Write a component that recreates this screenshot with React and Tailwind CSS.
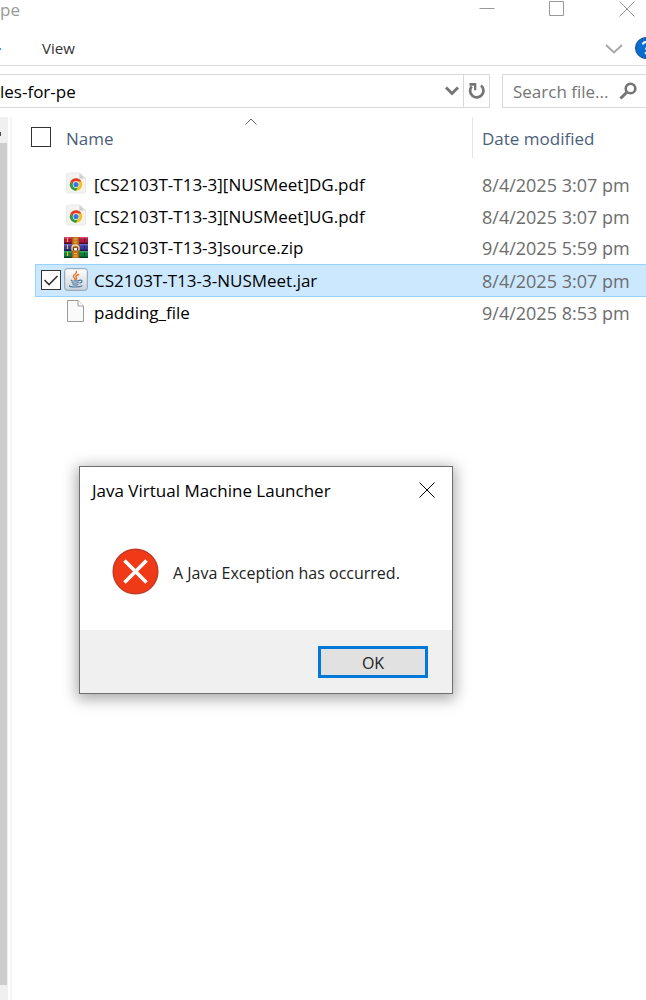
import React from "react";

const files = [
  { name: "[CS2103T-T13-3][NUSMeet]DG.pdf", date: "8/4/2025 3:07 pm", icon: "chrome" },
  { name: "[CS2103T-T13-3][NUSMeet]UG.pdf", date: "8/4/2025 3:07 pm", icon: "chrome" },
  { name: "[CS2103T-T13-3]source.zip", date: "9/4/2025 5:59 pm", icon: "archive" },
  { name: "CS2103T-T13-3-NUSMeet.jar", date: "8/4/2025 3:07 pm", icon: "java", selected: true },
  { name: "padding_file", date: "9/4/2025 8:53 pm", icon: "blank" },
];

function ChromeFileIcon() {
  return (
    <svg width="24" height="24" viewBox="0 0 24 24" aria-hidden="true">
      <path d="M4.500 1h11.500l5.500 5.500V19a2 2 0 0 1-2 2h-15a2 2 0 0 1-2-2V3a2 2 0 0 1 2-2z" fill="#f3f3f3" stroke="#e9e9e9" />
      <path d="M15.500 1v5.500h5.500z" fill="#cfcfcf" />
      <circle cx="12" cy="12.500" r="6.200" fill="#fbc116" />
      <path d="M6.630 9.400A6.200 6.200 0 0 1 17.370 9.400H12a3.100 3.100 0 0 0-2.700 4.600z" fill="#e33b2e" />
      <path d="M6.630 9.400A6.200 6.200 0 0 0 12 18.700l2.700-4.600a3.100 3.100 0 0 1-5.400 0z" fill="#2a9d4a" />
      <circle cx="12" cy="12.500" r="3.200" fill="#fff" />
      <circle cx="12" cy="12.500" r="2.600" fill="#2d7be8" />
    </svg>
  );
}

function ArchiveIcon() {
  return (
    <svg width="24" height="24" viewBox="0 0 24 24" aria-hidden="true">
      <rect x="0" y="1" width="24" height="6" fill="#b3123f" />
      <rect x="0" y="1" width="24" height="1.500" fill="#dc4770" />
      <rect x="0" y="6.500" width="24" height="1.500" fill="#4a1029" />
      <rect x="0" y="8" width="24" height="6" fill="#3b3a9c" />
      <rect x="0" y="8" width="24" height="1.500" fill="#6b69cf" />
      <rect x="0" y="13.500" width="24" height="1.500" fill="#1d1b4d" />
      <rect x="0" y="15" width="24" height="6" fill="#0d7f3e" />
      <rect x="0" y="15" width="24" height="1.500" fill="#37ab60" />
      <rect x="0" y="20.500" width="24" height="1.500" fill="#0a4022" />
      <path d="M3.500 2v4M3.500 9v4M3.500 16v4" stroke="#e8c33a" strokeWidth="1.200" />
      <path d="M20.500 2v4M20.500 9v4M20.500 16v4" stroke="#16182f" opacity=".5" />
      <rect x="8" y="1" width="7" height="21" fill="#c8761e" />
      <path d="M8 1v21M15 1v21" stroke="#7d4812" strokeWidth=".8" />
      <path d="M10 3h3M10 6h3M10 17.500h3M10 20h3" stroke="#efb54e" />
      <path d="M8 14.500V11.500a3.500 2.500 0 0 1 7 0v3" fill="none" stroke="#e7d9bd" strokeWidth="1.300" />
      <path d="M9 11.500h5v2.500l-2.500 1.500L9 14z" fill="#5b3a1c" />
      <rect x="10" y="12" width="3" height="2.500" fill="#f6f3e8" />
    </svg>
  );
}

function JavaIcon() {
  return (
    <svg width="24" height="24" viewBox="0 0 24 24" aria-hidden="true">
      <defs>
        <linearGradient id="javaTile" x1="0" y1="0" x2="0" y2="1">
          <stop offset="0" stopColor="#fefefe" />
          <stop offset="1" stopColor="#ccd3da" />
        </linearGradient>
      </defs>
      <rect x="0.700" y="0.700" width="22.600" height="21.600" rx="2.500" fill="url(#javaTile)" stroke="#8c9eac" />
      <path d="M12.400 3.500c1 2-3.200 3.100-3 5.100.1 1.100 1.500 1.700 1.900 3.100M14.700 6.500c-1.900.7-3 1.500-2.600 2.600.3.800 1 1.300.1 2.500" fill="none" stroke="#e8772e" strokeWidth="1.400" strokeLinecap="round" />
      <path d="M7.500 12.200c-1.800.9 6 1.200 8 .2M8 14.500c1.500.7 5 .7 6.500 0M9 16.500c1.200.6 3.600.6 5 0M15.800 12.200c3-.6 2.800 2.200.1 2.900M5.500 17.700c-1 1.600 10.500 1.800 12.500.1" fill="none" stroke="#4c7ba0" strokeWidth="1.200" strokeLinecap="round" />
    </svg>
  );
}

function BlankFileIcon() {
  return (
    <svg width="24" height="24" viewBox="0 0 24 24" aria-hidden="true">
      <path d="M3.500.5h10.500l5.500 5.500v15.500h-16z" fill="#fafafa" stroke="#9b9b9b" />
      <path d="M14 .5V6h5.500" fill="#fff" stroke="#9b9b9b" />
    </svg>
  );
}

const icons = { chrome: ChromeFileIcon, archive: ArchiveIcon, java: JavaIcon, blank: BlankFileIcon };

function CloseGlyph() {
  return (
    <svg width="16" height="16" viewBox="0 0 16 16" fill="none" stroke="currentColor" aria-hidden="true">
      <path d="M.5.5l15 15M15.500.5l-15 15" />
    </svg>
  );
}

function TitleBar() {
  return (
    <header className="flex h-8 items-start justify-between pr-[11px] text-[#999999]">
      <h1 className="text-[17px] leading-5">pe</h1>
      <div className="flex gap-[54px] pt-px">
        <button aria-label="Minimize" className="h-4 w-4">
          <svg width="16" height="16" viewBox="0 0 16 16" stroke="currentColor" aria-hidden="true">
            <path d="M.5 7.500h15" />
          </svg>
        </button>
        <button aria-label="Maximize" className="h-4 w-4">
          <svg width="16" height="16" viewBox="0 0 16 16" fill="none" stroke="currentColor" aria-hidden="true">
            <path d="M.5.5h14v14H.5z" />
          </svg>
        </button>
        <button aria-label="Close window" className="h-4 w-4">
          <CloseGlyph />
        </button>
      </div>
    </header>
  );
}

function Ribbon() {
  return (
    <nav className="flex h-[34px] items-center border-b border-[#dadbdc]">
      <span className="h-[2px] w-px bg-[#2b9af0]" />
      <button className="ml-[41px] pb-[2px] text-[15px] leading-5 text-[#333333]">View</button>
      <button aria-label="Expand the Ribbon" className="mr-3 ml-auto">
        <svg width="18" height="10" viewBox="0 0 18 10" fill="none" stroke="#a8a8a8" strokeWidth="2" aria-hidden="true">
          <path d="M1 1l8 7.500L17 1" />
        </svg>
      </button>
      <button aria-label="Help" className="w-[11px] overflow-hidden pb-px">
        <svg className="max-w-none" width="22" height="22" viewBox="0 0 22 22" aria-hidden="true">
          <circle cx="11" cy="11" r="10.500" fill="#0a6cce" stroke="#0b4f96" />
          <path d="M8 7.500c0-3.500 6-3.500 6 0 0 2.200-3 2.400-3 5" fill="none" stroke="#fff" strokeWidth="2" />
          <circle cx="11" cy="16" r="1.300" fill="#fff" />
        </svg>
      </button>
    </nav>
  );
}

function AddressRow() {
  return (
    <div className="mt-2 flex h-[34px] gap-3">
      <div className="flex min-w-0 flex-1 border border-l-0 border-[#d9d9d9]">
        <input aria-label="Address" defaultValue="les-for-pe" className="min-w-0 flex-1 pt-px text-[17px] leading-6 text-black outline-none" />
        <button aria-label="Previous locations" className="flex w-[22px] items-center justify-center">
          <svg width="14" height="10" viewBox="0 0 14 10" fill="none" stroke="#757575" strokeWidth="3" aria-hidden="true">
            <path d="M1 1.500l6 6 6-6" />
          </svg>
        </button>
        <button aria-label="Refresh" className="flex w-[26px] items-center justify-center border-l border-[#d9d9d9] pl-px">
          <svg width="18" height="18" viewBox="0 0 18 18" fill="none" aria-hidden="true">
            <path d="M13 3.500a6.700 6.700 0 1 1-9.300.8" stroke="#757575" strokeWidth="2.800" />
            <path d="M1.500 1h6.800v7.300H6V3.800H1.500z" fill="#757575" />
          </svg>
        </button>
      </div>
      <div className="flex w-36 items-center border border-r-0 border-[#d9d9d9] pr-[9px] pl-[10px]">
        <input type="text" aria-label="Search files" placeholder="Search file..." className="min-w-0 flex-1 pt-px text-[17px] leading-6 outline-none placeholder:text-[#757575]" />
        <button aria-label="Search">
          <svg width="18" height="18" viewBox="0 0 18 18" fill="none" stroke="#757575" aria-hidden="true">
            <circle cx="11.500" cy="6.500" r="4.800" strokeWidth="2.600" />
            <path d="M8 10l-6.500 6.500" strokeWidth="3" />
          </svg>
        </button>
      </div>
    </div>
  );
}

function FileTable() {
  return (
    <table className="w-full table-fixed border-collapse text-left text-[17px] leading-6">
      <colgroup>
        <col className="w-[23px]" />
        <col className="w-[29px]" />
        <col />
        <col className="w-[174px]" />
      </colgroup>
      <thead>
        <tr className="h-[51px] align-top text-[#4c607a]">
          <th colSpan={2} className="p-0 pt-[10px] pl-[19px] font-normal">
            <input type="checkbox" aria-label="Select all" className="block h-5 w-5 appearance-none border border-[#333333] bg-white" />
          </th>
          <th className="relative p-0 pt-[10px] pl-[2px] font-normal">
            <button>Name</button>
            <svg className="absolute top-px left-[calc(50%-23px)]" width="12" height="7" viewBox="0 0 12 7" fill="none" stroke="#666" aria-hidden="true">
              <path d="M.5 6.500L6 1l5.500 5.500" />
            </svg>
          </th>
          <th className="p-0 font-normal">
            <button className="flex h-[41px] w-full items-start border-l border-[#e5e5e5] pt-[10px] pl-[9px]">Date modified</button>
          </th>
        </tr>
      </thead>
      <tbody>
        {files.map((file) => {
          const Icon = icons[file.icon];
          const tone = file.selected ? "border-y border-[#99d1ff] bg-[#cce8ff] p-0" : "p-0";
          return (
            <tr key={file.name} className="h-8">
              <td className="p-0" />
              <td className={file.selected ? tone + " border-l pl-[5px]" : tone}>
                {file.selected && (
                  <span className="relative block h-5 w-5">
                    <input type="checkbox" defaultChecked aria-label={"Select " + file.name} className="peer block h-5 w-5 appearance-none border border-[#333333] bg-white" />
                    <svg className="pointer-events-none absolute inset-0 hidden peer-checked:block" width="20" height="20" viewBox="0 0 20 20" fill="none" stroke="#333" strokeWidth="1.600" aria-hidden="true">
                      <path d="M3.500 10l4.500 4.500L16.500 6" />
                    </svg>
                  </span>
                )}
              </td>
              <td className={tone}>
                <div className="flex items-center gap-[6px] text-black">
                  <Icon />
                  <span className="pt-px">{file.name}</span>
                </div>
              </td>
              <td className={tone}>
                <div className="pt-px pl-[10px] text-[18px] text-[#6d6d6d]">{file.date}</div>
              </td>
            </tr>
          );
        })}
      </tbody>
    </table>
  );
}

function ErrorDialog() {
  return (
    <section role="alertdialog" aria-labelledby="dialog-title" aria-describedby="dialog-message" className="absolute top-[466px] left-[79px] w-[374px] border border-[#6e6e6e] bg-white shadow-[0_3px_14px_2px_rgba(0,0,0,0.35)]">
      <div className="flex items-start justify-between pt-3 pr-[17px] pl-3">
        <h2 id="dialog-title" className="text-[17px] leading-6 text-black">Java Virtual Machine Launcher</h2>
        <button aria-label="Close" className="pt-[3px] text-black">
          <CloseGlyph />
        </button>
      </div>
      <div className="flex items-center gap-[14px] pt-[45px] pb-[35px] pl-8">
        <svg width="47" height="47" viewBox="0 0 47 47" aria-hidden="true">
          <circle cx="23.500" cy="23.500" r="22.300" fill="#f03a17" stroke="#c13a22" strokeWidth="1.500" />
          <path d="M12.500 12.500l22 22M34.500 12.500l-22 22" stroke="#fff" strokeWidth="3.600" />
        </svg>
        <p id="dialog-message" className="pt-[2px] text-[16px] leading-6 font-medium text-[#222222]">A Java Exception has occurred.</p>
      </div>
      <div className="flex justify-end bg-[#f0f0f0] pt-4 pr-6 pb-[15px]">
        <button className="h-8 w-[110px] border-3 border-[#0078d7] bg-[#e1e1e1] pt-[2px] text-[16px] leading-6 font-medium text-[#222222]">OK</button>
      </div>
    </section>
  );
}

export default function App() {
  return (
    <main className="relative flex min-h-screen flex-col overflow-hidden bg-white font-['Open_Sans','Noto_Sans',sans-serif]">
      <TitleBar />
      <Ribbon />
      <AddressRow />
      <div className="mt-[9px] flex flex-1">
        <div className="flex w-2 flex-col bg-[#f0f0f0] pt-[15px] pb-[15px]">
          <span className="mb-[7px] h-1 w-px bg-[#505050]" />
          <div className="w-[7px] flex-1 bg-[#cdcdcd]" />
        </div>
        <div className="ml-[2px] w-[2px] bg-[#f5f5f5]" />
        <div className="min-w-0 flex-1">
          <FileTable />
        </div>
      </div>
      <ErrorDialog />
    </main>
  );
}
